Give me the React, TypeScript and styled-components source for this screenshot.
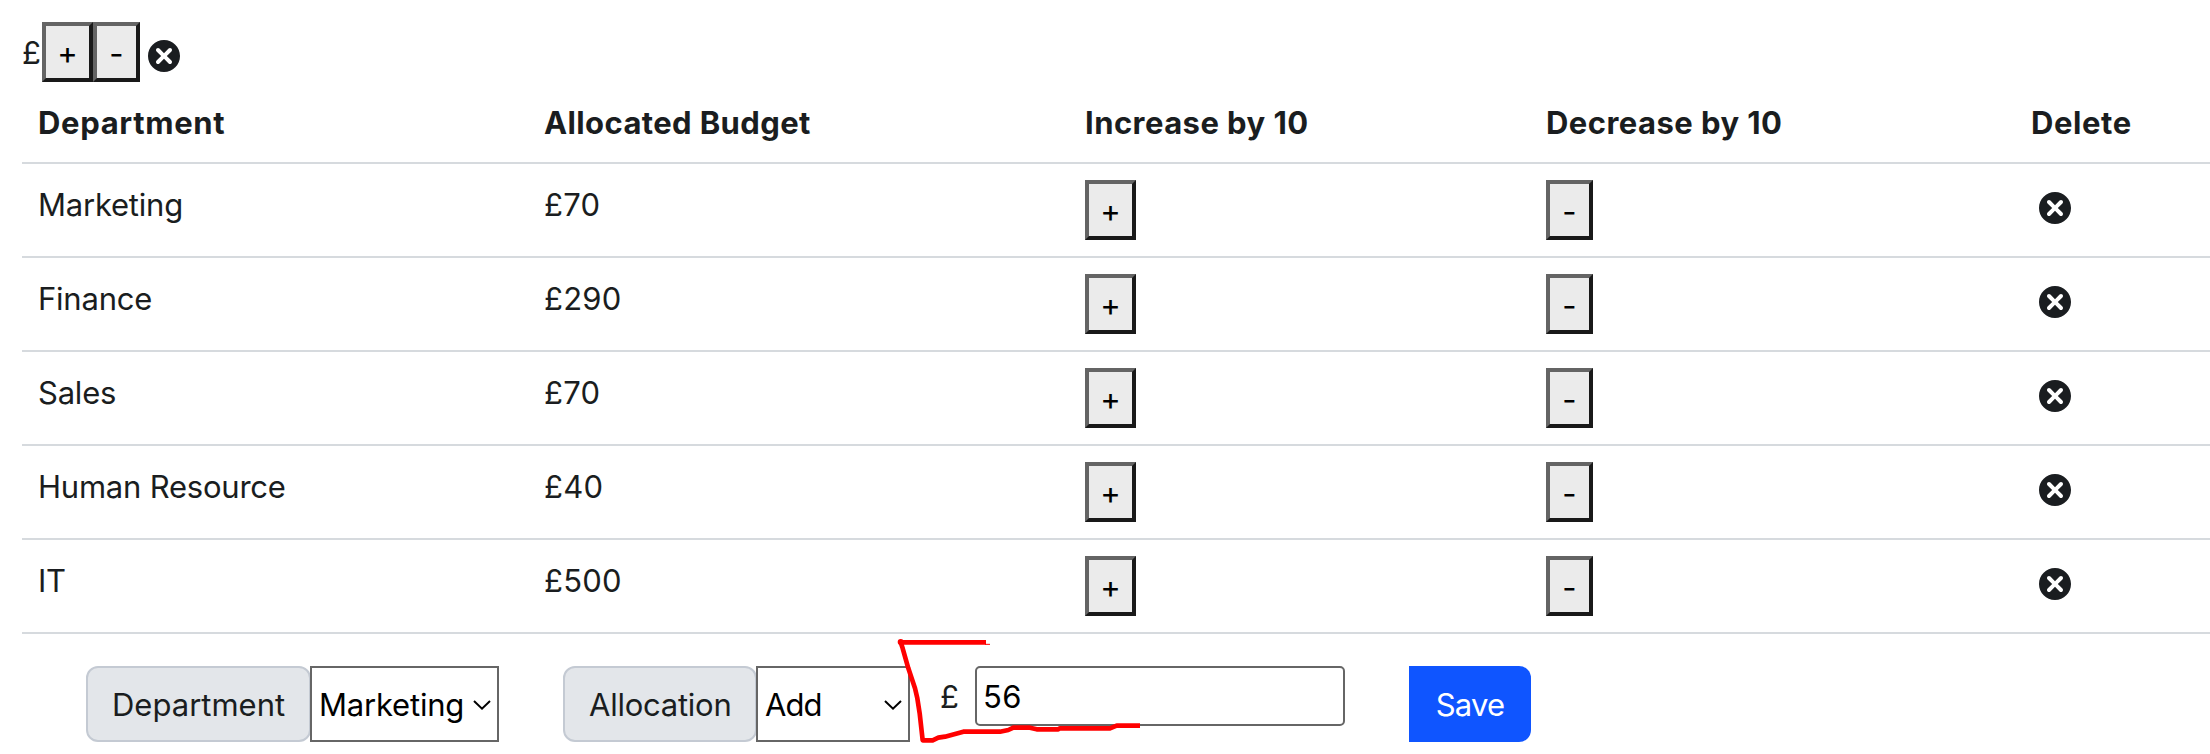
import React from 'react';
import styled, { createGlobalStyle } from 'styled-components';
import { TiDelete } from 'react-icons/ti';

const GlobalStyle = createGlobalStyle`
  *, *::before, *::after { box-sizing: border-box; }
  html { overflow: hidden; background: #fff; }
  body {
    margin: 0;
    background: #fff;
    color: #1a1d20;
    font: 400 31px/48px Inter, "Liberation Sans", sans-serif;
    letter-spacing: -0.22px;
  }
`;

const Page = styled.main`
  position: relative;
  width: 2210px;
  height: 754px;
  padding-left: 22px;
  overflow: hidden;
`;

const EmptyItem = styled.div`
  display: flex;
  height: 82px;
  padding-top: 22px;
`;

const Currency = styled.span`
  width: 20px;
  flex: none;
  padding-top: 7px;
`;

const StepButton = styled.button`
  display: flex;
  align-items: center;
  justify-content: center;
  flex: none;
  height: 60px;
  margin: 0;
  border: 4px solid;
  border-color: #646464 #191919 #191919 #646464;
  border-radius: 0;
  background: #ebebeb;
  color: #000;
  font: inherit;
  line-height: 48px;
`;

const IncreaseButton = styled(StepButton)`
  width: 51px;
  padding: 1px 0 0;
`;

const DecreaseButton = styled(StepButton)`
  width: 47px;
  padding: 3px 0 0;
`;

const DeleteIcon = styled(TiDelete)`
  display: block;
  flex: none;
  width: 48px;
  height: 48px;
  margin-top: 10px;
`;

const columns = '506px 541px 461px 485px 1fr';

const HeadRow = styled.div`
  display: grid;
  grid-template-columns: ${columns};
  height: 82px;
  padding: 17px 0 0 16px;
  border-bottom: 2px solid #d6dade;
  font-weight: 700;
`;

const HeadCell = styled.div<{ $spacing?: number }>`
  white-space: nowrap;
  letter-spacing: ${({ $spacing = 0.45 }) => $spacing}px;
`;

const Row = styled.div`
  display: grid;
  grid-template-columns: ${columns};
  align-items: start;
  height: 94px;
  padding: 16px 0 0 16px;
  border-bottom: 2px solid #d6dade;
`;

const TextCell = styled.div<{ $spacing?: number }>`
  padding-top: 1px;
  letter-spacing: ${({ $spacing = -0.22 }) => $spacing}px;
`;

const DeleteCell = styled.div`
  display: flex;
  margin-top: -6px;
`;

const Form = styled.form`
  display: flex;
  align-items: flex-start;
  padding: 32px 0 0 64px;
`;

const Group = styled.div<{ $gap: number }>`
  display: flex;
  height: 76px;
  margin-right: ${({ $gap }) => $gap}px;
`;

const Label = styled.label<{ $width: number; $spacing?: number }>`
  flex: none;
  width: ${({ $width }) => $width}px;
  margin-right: -1px;
  padding: 13px 0 0 24px;
  border: 2px solid #c4cad3;
  border-radius: 12px;
  background: #e3e6ea;
  letter-spacing: ${({ $spacing = 0 }) => $spacing}px;
`;

const SelectBox = styled.div<{ $width: number }>`
  display: flex;
  align-items: center;
  flex: none;
  width: ${({ $width }) => $width}px;
  padding: 2px 6px 0 7px;
  border: 2px solid #666;
  background: #fff;
  color: #000;
`;

const Select = styled.select<{ $spacing: number }>`
  appearance: none;
  flex: 1;
  min-width: 0;
  height: 48px;
  margin: 0;
  padding: 0;
  border: 0;
  outline: 0;
  background: transparent;
  color: #000;
  font: inherit;
  letter-spacing: ${({ $spacing }) => $spacing}px;
`;

const Chevron = styled.svg`
  flex: none;
  width: 18px;
  height: 10px;
`;

const Pound = styled.span`
  width: 35px;
  padding-top: 7px;
`;

const AmountInput = styled.input`
  width: 370px;
  height: 60px;
  margin: 0 64px 0 0;
  padding: 1px 6px 0;
  border: 2px solid #666;
  border-radius: 5px;
  outline: 0;
  background: #fff;
  color: #000;
  font: inherit;
  letter-spacing: 0.4px;
`;

const SaveButton = styled.button`
  width: 122px;
  height: 76px;
  padding: 1px 0 0;
  border: 0;
  border-radius: 0 12px 12px 0;
  background: #0f55ff;
  color: #fff;
  font: inherit;
  letter-spacing: -0.8px;
`;

const Markup = styled.svg`
  position: absolute;
  left: 880px;
  top: 620px;
  width: 300px;
  height: 134px;
  pointer-events: none;
`;

const departments = [
  { name: 'Marketing', budget: 70 },
  { name: 'Finance', budget: 290 },
  { name: 'Sales', budget: 70 },
  { name: 'Human Resource', budget: 40 },
  { name: 'IT', budget: 500 },
];

const Arrow = () => (
  <Chevron viewBox="0 0 18 10" fill="none" stroke="#000" strokeWidth="2">
    <path d="M1 1 9 8.6 17 1" />
  </Chevron>
);

export default function App() {
  return (
    <>
      <GlobalStyle />
      <Page>
        <EmptyItem>
          <Currency>£</Currency>
          <IncreaseButton>+</IncreaseButton>
          <DecreaseButton>-</DecreaseButton>
          <DeleteIcon />
        </EmptyItem>

        <HeadRow>
          <HeadCell $spacing={0.66}>Department</HeadCell>
          <HeadCell $spacing={0.38}>Allocated Budget</HeadCell>
          <HeadCell>Increase by 10</HeadCell>
          <HeadCell>Decrease by 10</HeadCell>
          <HeadCell $spacing={0.59}>Delete</HeadCell>
        </HeadRow>
        {departments.map(({ name, budget }) => (
          <Row key={name}>
            <TextCell>{name}</TextCell>
            <TextCell $spacing={0.25}>£{budget}</TextCell>
            <IncreaseButton>+</IncreaseButton>
            <DecreaseButton>-</DecreaseButton>
            <DeleteCell>
              <DeleteIcon />
            </DeleteCell>
          </Row>
        ))}

        <Form onSubmit={(e) => e.preventDefault()}>
          <Group $gap={64}>
            <Label $width={225} htmlFor="department">Department</Label>
            <SelectBox $width={189}>
              <Select id="department" $spacing={-0.2} defaultValue="Marketing">
                {departments.map(({ name }) => (
                  <option key={name}>{name}</option>
                ))}
              </Select>
              <Arrow />
            </SelectBox>
          </Group>
          <Group $gap={30}>
            <Label $width={194} $spacing={-0.25} htmlFor="allocation">Allocation</Label>
            <SelectBox $width={154}>
              <Select id="allocation" $spacing={-0.9} defaultValue="Add">
                <option>Add</option>
                <option>Reduce</option>
              </Select>
              <Arrow />
            </SelectBox>
          </Group>
          <Pound>£</Pound>
          <AmountInput defaultValue="56" />
          <SaveButton>Save</SaveButton>
        </Form>

        <Markup viewBox="0 0 900 402" fill="none" stroke="#f00" strokeLinejoin="round">
          <path
            d="M318 67H62L68 85 85 145 105 205 112 235 119 280 128 361H158L175 353 195 350 250 335H360L385 330 400 323H450L470 328H535L540 325H690L710 317H780"
            strokeWidth="14"
          />
          <circle cx="62" cy="66" r="9" fill="#f00" stroke="none" />
          <path d="M315 73H330" strokeWidth="3" />
        </Markup>
      </Page>
    </>
  );
}
